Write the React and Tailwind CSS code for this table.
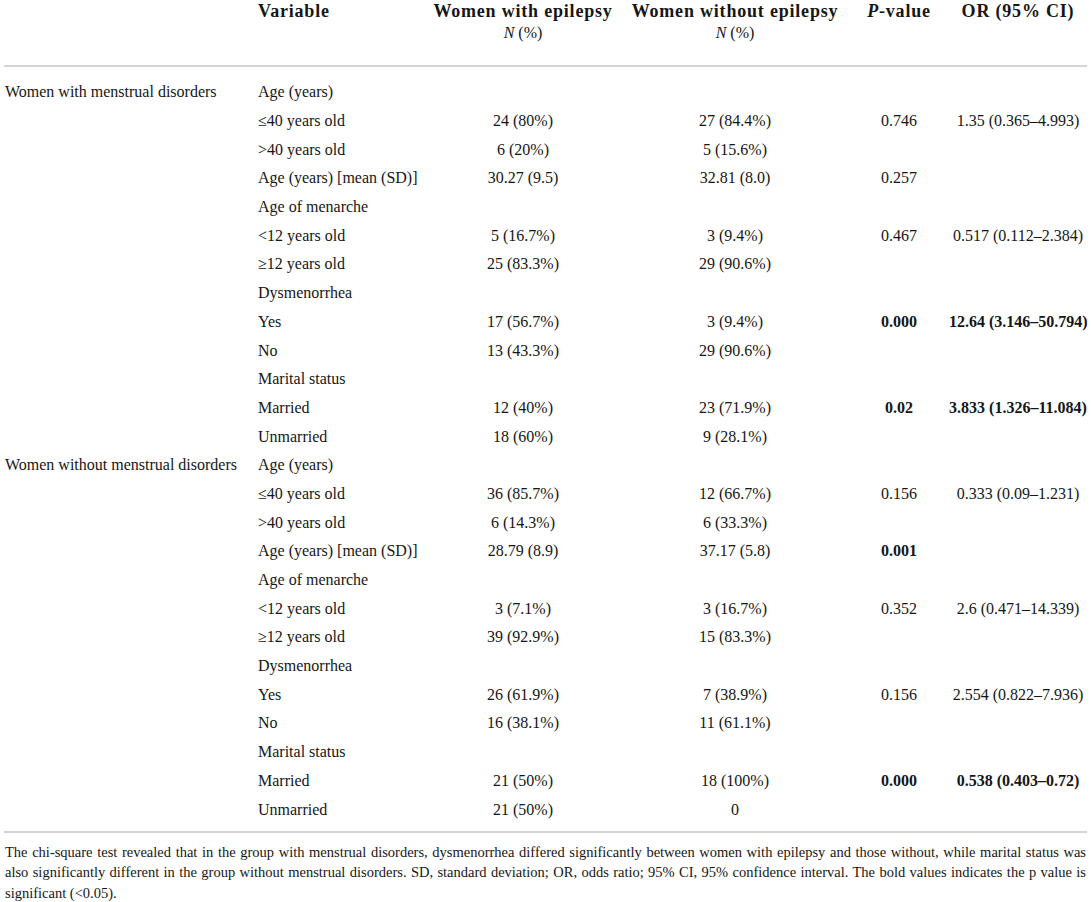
import React from "react";

const rows = [
  { g: "Women with menstrual disorders", v: "Age (years)" },
  { v: "≤40 years old", a: "24 (80%)", b: "27 (84.4%)", p: "0.746", o: "1.35 (0.365–4.993)" },
  { v: ">40 years old", a: "6 (20%)", b: "5 (15.6%)" },
  { v: "Age (years) [mean (SD)]", a: "30.27 (9.5)", b: "32.81 (8.0)", p: "0.257" },
  { v: "Age of menarche" },
  { v: "<12 years old", a: "5 (16.7%)", b: "3 (9.4%)", p: "0.467", o: "0.517 (0.112–2.384)" },
  { v: "≥12 years old", a: "25 (83.3%)", b: "29 (90.6%)" },
  { v: "Dysmenorrhea" },
  { v: "Yes", a: "17 (56.7%)", b: "3 (9.4%)", p: "0.000", o: "12.64 (3.146–50.794)", bp: true, bo: true },
  { v: "No", a: "13 (43.3%)", b: "29 (90.6%)" },
  { v: "Marital status" },
  { v: "Married", a: "12 (40%)", b: "23 (71.9%)", p: "0.02", o: "3.833 (1.326–11.084)", bp: true, bo: true },
  { v: "Unmarried", a: "18 (60%)", b: "9 (28.1%)" },
  { g: "Women without menstrual disorders", v: "Age (years)" },
  { v: "≤40 years old", a: "36 (85.7%)", b: "12 (66.7%)", p: "0.156", o: "0.333 (0.09–1.231)" },
  { v: ">40 years old", a: "6 (14.3%)", b: "6 (33.3%)" },
  { v: "Age (years) [mean (SD)]", a: "28.79 (8.9)", b: "37.17 (5.8)", p: "0.001", bp: true },
  { v: "Age of menarche" },
  { v: "<12 years old", a: "3 (7.1%)", b: "3 (16.7%)", p: "0.352", o: "2.6 (0.471–14.339)" },
  { v: "≥12 years old", a: "39 (92.9%)", b: "15 (83.3%)" },
  { v: "Dysmenorrhea" },
  { v: "Yes", a: "26 (61.9%)", b: "7 (38.9%)", p: "0.156", o: "2.554 (0.822–7.936)" },
  { v: "No", a: "16 (38.1%)", b: "11 (61.1%)" },
  { v: "Marital status" },
  { v: "Married", a: "21 (50%)", b: "18 (100%)", p: "0.000", o: "0.538 (0.403–0.72)", bp: true, bo: true },
  { v: "Unmarried", a: "21 (50%)", b: "0" },
];

const cols = "grid grid-cols-[258px_167px_196px_228px_100px_138px]";
const head = "font-bold text-[18px] tracking-[0.8px]";

export default function App() {
  return (
    <div
      className="w-[1091px] h-[902px] bg-white text-[#161616] overflow-hidden"
      style={{ fontFamily: '"Liberation Serif", "Times New Roman", serif' }}
    >
      {/* header */}
      <div className={`${cols} pt-[1px] h-[65px] text-[16px] leading-[21px]`}>
        <div />
        <div className={head}>Variable</div>
        <div className="text-center">
          <div className={head}>Women with epilepsy</div>
          <div>
            <span className="italic">N</span> (%)
          </div>
        </div>
        <div className="text-center">
          <div className={head}>Women without epilepsy</div>
          <div>
            <span className="italic">N</span> (%)
          </div>
        </div>
        <div className={`text-center whitespace-nowrap ${head}`}>
          <span className="italic">P</span>-value
        </div>
        <div className={`text-center whitespace-nowrap ${head}`}>OR (95% CI)</div>
      </div>
      <div className="mx-[4px] h-[2px] bg-[#d4d4d4]" />
      <div className="pt-[11px] pb-[7px]">
        {rows.map((r, i) => (
          <div key={i} className={`${cols} h-[28.7px] items-center text-[16px] leading-none`}>
            <div className="pl-[5px] whitespace-nowrap">{r.g || ""}</div>
            <div className="whitespace-nowrap">{r.v}</div>
            <div className="text-center">{r.a || ""}</div>
            <div className="text-center">{r.b || ""}</div>
            <div className={`text-center ${r.bp ? "font-bold" : ""}`}>{r.p || ""}</div>
            <div className={`text-center whitespace-nowrap ${r.bo ? "font-bold" : ""}`}>{r.o || ""}</div>
          </div>
        ))}
      </div>
      <div className="mx-[4px] h-[2px] bg-[#d4d4d4]" />
      <div className="px-[5px] pt-[9px] text-[14.5px] leading-[20.5px]">
        <div className="whitespace-nowrap [text-align-last:justify]">
          The chi-square test revealed that in the group with menstrual disorders, dysmenorrhea differed significantly between women with epilepsy and those without, while marital status was
        </div>
        <div className="whitespace-nowrap [text-align-last:justify]">
          also significantly different in the group without menstrual disorders. SD, standard deviation; OR, odds ratio; 95% CI, 95% confidence interval. The bold values indicates the p value is
        </div>
        <div className="whitespace-nowrap">significant (&lt;0.05).</div>
      </div>
    </div>
  );
}
